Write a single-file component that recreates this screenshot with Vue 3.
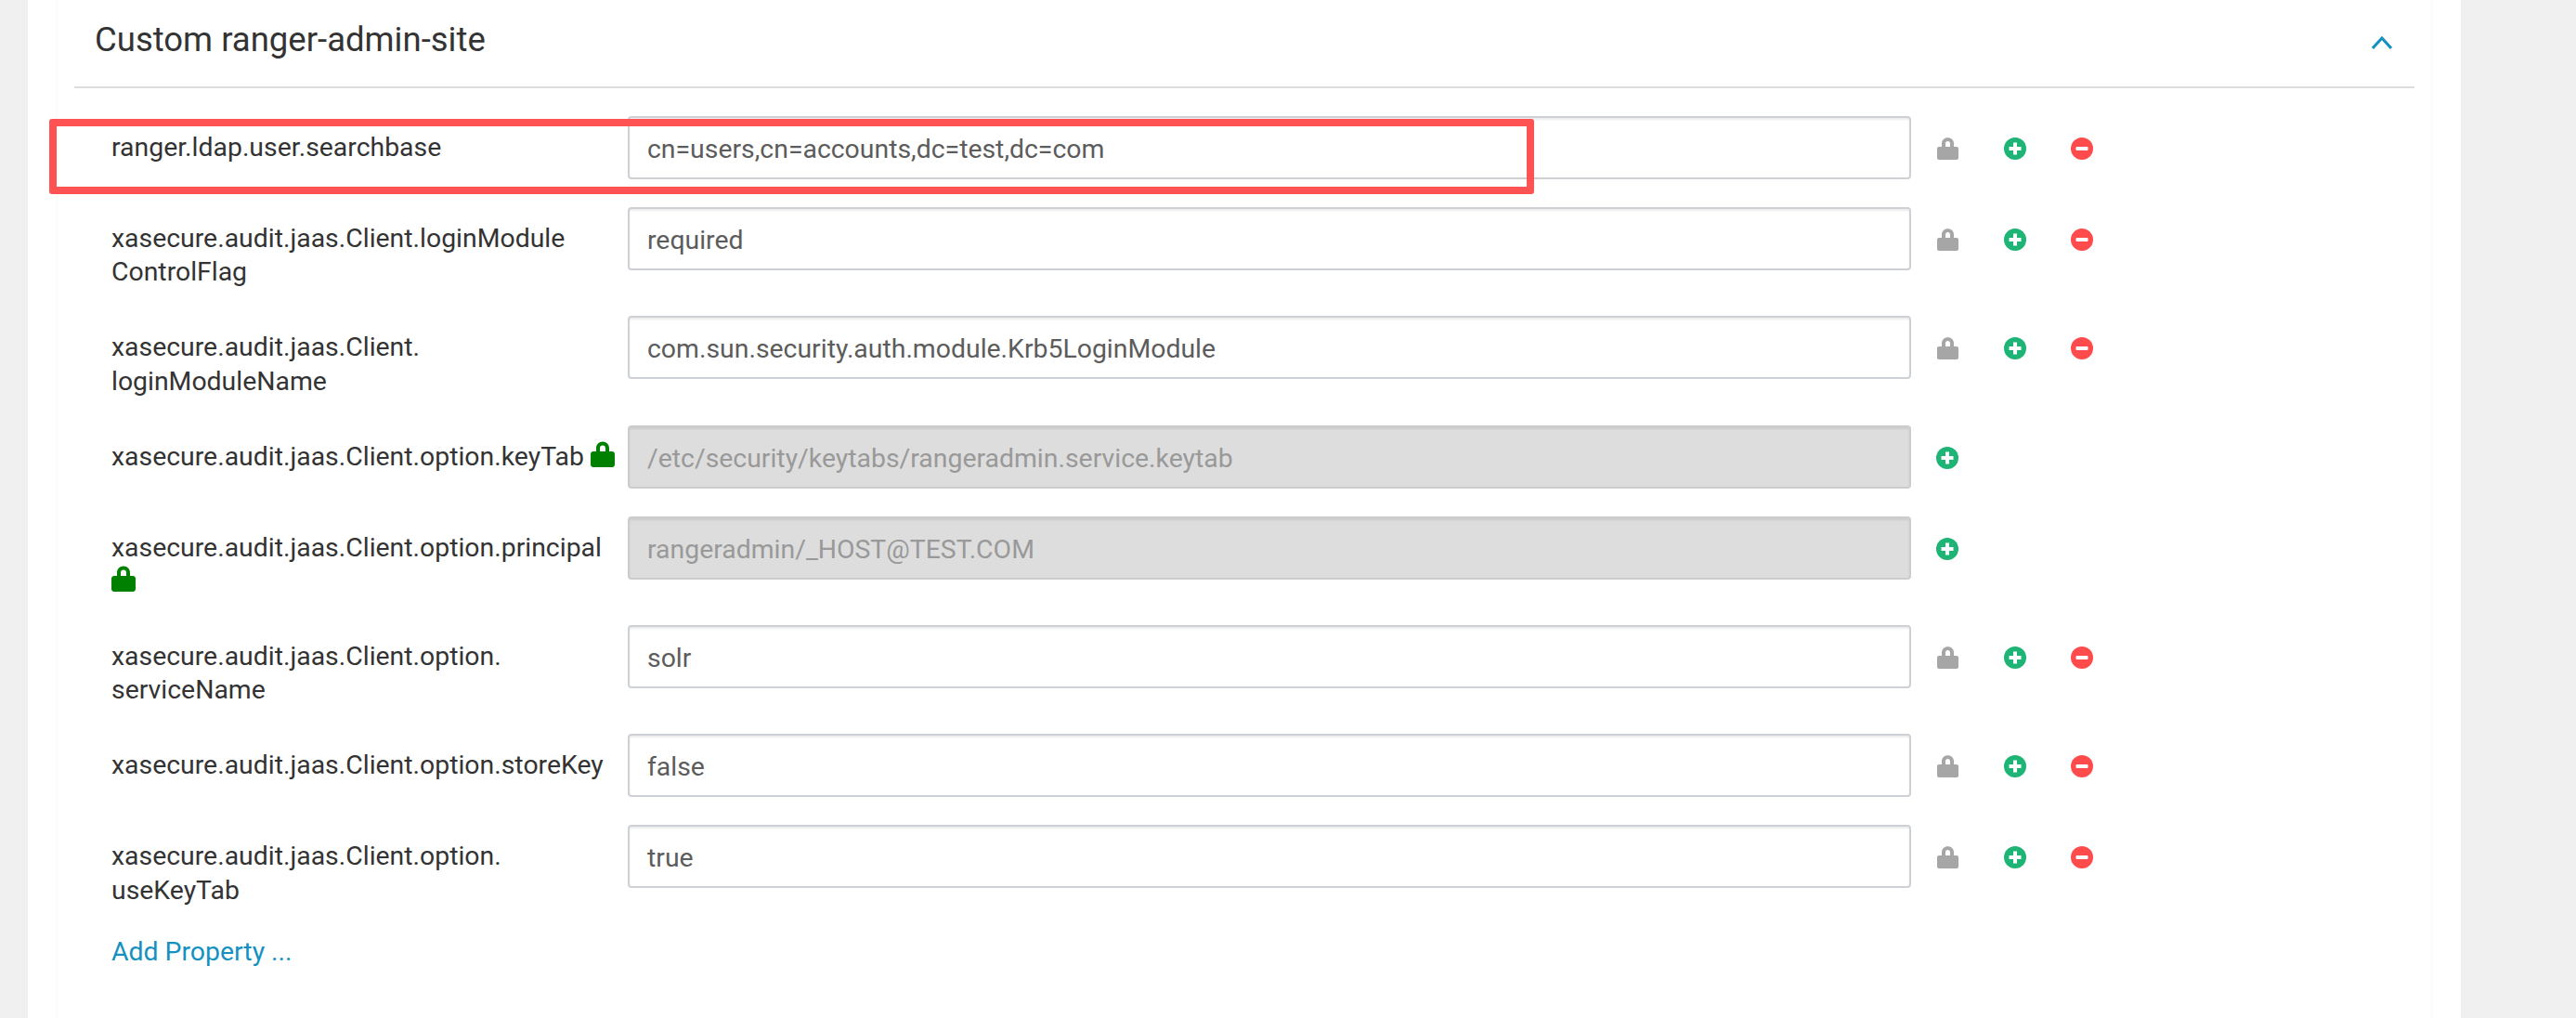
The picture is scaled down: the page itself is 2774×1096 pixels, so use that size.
<script setup>
const rows = [
  { parts: ['ranger.ldap.user.searchbase'], value: 'cn=users,cn=accounts,dc=test,dc=com' },
  { parts: ['xasecure.audit.jaas.Client.loginModule', 'ControlFlag'], value: 'required' },
  { parts: ['xasecure.audit.jaas.Client.', 'loginModuleName'], value: 'com.sun.security.auth.module.Krb5LoginModule' },
  { parts: ['xasecure.audit.jaas.Client.option.keyTab'], value: '/etc/security/keytabs/rangeradmin.service.keytab', locked: true },
  { parts: ['xasecure.audit.jaas.Client.option.principal'], value: 'rangeradmin/_HOST@TEST.COM', locked: true },
  { parts: ['xasecure.audit.jaas.Client.option.', 'serviceName'], value: 'solr' },
  { parts: ['xasecure.audit.jaas.Client.option.storeKey'], value: 'false' },
  { parts: ['xasecure.audit.jaas.Client.option.', 'useKeyTab'], value: 'true' },
]
</script>

<template>
  <div class="page">
    <div class="card">
      <div class="box">
        <header class="head">
          <h2 class="title">Custom ranger-admin-site</h2>
          <svg class="chevron" viewBox="0 0 22 14" width="22" height="14">
            <path d="M1 13 L11 2 L21 13" fill="none" stroke="#1491c1" stroke-width="3" />
          </svg>
        </header>
        <div class="rows">
          <div v-for="row in rows" :key="row.value" class="row">
            <div class="label">
              <template v-for="(part, i) in row.parts" :key="i">
                <wbr v-if="i > 0" />{{ part }}
              </template>
              <template v-if="row.locked">{{ ' ' }}<svg class="green-lock" viewBox="0 0 26 28" width="26" height="28">
                <path fill="#008000" fill-rule="evenodd" d="M6 11V7.500C6 3.400 9 .5 13 .5s7 2.900 7 7V11h3c1.700 0 3 1.300 3 3v11c0 1.700-1.300 3-3 3H3c-1.700 0-3-1.300-3-3V14c0-1.700 1.300-3 3-3h3zm4 0h6V7.500C16 5.700 14.800 4.500 13 4.500S10 5.700 10 7.500V11z" />
              </svg></template>
            </div>
            <div class="field" :class="{ disabled: row.locked }">{{ row.value }}</div>
            <div class="actions">
              <span v-if="!row.locked" class="slot">
                <svg viewBox="0 0 23 24" width="23" height="24">
                  <path fill="#a6a6a6" fill-rule="evenodd" d="M5 10V6.500C5 2.900 7.800.2 11.500.2S18 2.900 18 6.500V10h3c1.100 0 2 .9 2 2v10c0 1.100-.9 2-2 2H2c-1.100 0-2-.9-2-2V12c0-1.100.9-2 2-2h3zm4 0h5V6.500c0-1.500-1-2.500-2.500-2.500S9 5 9 6.500V10z" />
                </svg>
              </span>
              <span class="slot">
                <svg viewBox="0 0 24 24" width="24" height="24">
                  <circle cx="12" cy="12" r="12" fill="#1eb475" />
                  <path fill="#fff" d="M10 5.500h4V10h4.500v4H14v4.500h-4V14H5.500v-4H10z" />
                </svg>
              </span>
              <span v-if="!row.locked" class="slot">
                <svg viewBox="0 0 24 24" width="24" height="24">
                  <circle cx="12" cy="12" r="12" fill="#ff4b4b" />
                  <rect x="5.500" y="10" width="13" height="4" rx="1" fill="#fff" />
                </svg>
              </span>
            </div>
          </div>
          <a class="add">Add Property ...</a>
        </div>
      </div>
    </div>
    <div class="highlight"></div>
  </div>
</template>

<style>
html, body { margin: 0; background: #f0f0f0; }
</style>

<style scoped>
.page {
  position: relative;
  box-sizing: border-box;
  width: 2774px;
  height: 1096px;
  overflow: hidden;
  padding: 0 124px 0 30px;
  background: #f0f0f0;
  font-family: Roboto, "Liberation Sans", sans-serif;
  font-size: 28.4px;
  color: #333;
}
.card {
  height: 100%;
  padding: 0 30px;
  background: #fff;
}
.box {
  box-sizing: border-box;
  height: 100%;
  padding: 0 18px;
  border-left: 2px solid #fcfcfc;
  border-right: 2px solid #fcfcfc;
}
.head {
  box-sizing: border-box;
  height: 95px;
  display: flex;
  align-items: center;
  justify-content: space-between;
  padding: 0 24px 8px 22px;
  border-bottom: 2px solid #ddd;
}
.title {
  margin: 0;
  font-size: 36.5px;
  font-weight: 400;
  color: #333;
}
.chevron {
  display: block;
  margin-top: 6px;
}
.rows { padding: 30px 0 0 40px; }
.row {
  display: flex;
  align-items: flex-start;
  margin-bottom: 30px;
}
.label {
  box-sizing: border-box;
  width: 556px;
  padding: 16px 10px 0 0;
  margin-bottom: -1.500px;
  line-height: 36.4px;
}
.green-lock {
  vertical-align: -2px;
}
.field {
  box-sizing: border-box;
  width: 1382px;
  height: 68px;
  line-height: 68px;
  padding: 0 19px;
  border: 2px solid #cdd0d4;
  border-radius: 4px;
  box-shadow: inset 0 2px 2px rgba(0, 0, 0, 0.075);
  background: #fff;
  color: #5c5c5c;
  white-space: nowrap;
}
.field.disabled {
  background: #ddd;
  border-color: #ccc;
  color: #999;
}
.actions {
  box-sizing: border-box;
  display: flex;
  align-items: center;
  height: 68px;
  padding: 2px 0 0 3px;
}
.slot {
  display: flex;
  justify-content: center;
  width: 72.500px;
}
.slot svg { display: block; }
.add {
  display: block;
  line-height: 37px;
  color: #1491c1;
}
.highlight {
  position: absolute;
  left: 53px;
  top: 128px;
  box-sizing: border-box;
  width: 1599px;
  height: 81px;
  border: 8px solid #ff5353;
  border-radius: 3px;
}
</style>
